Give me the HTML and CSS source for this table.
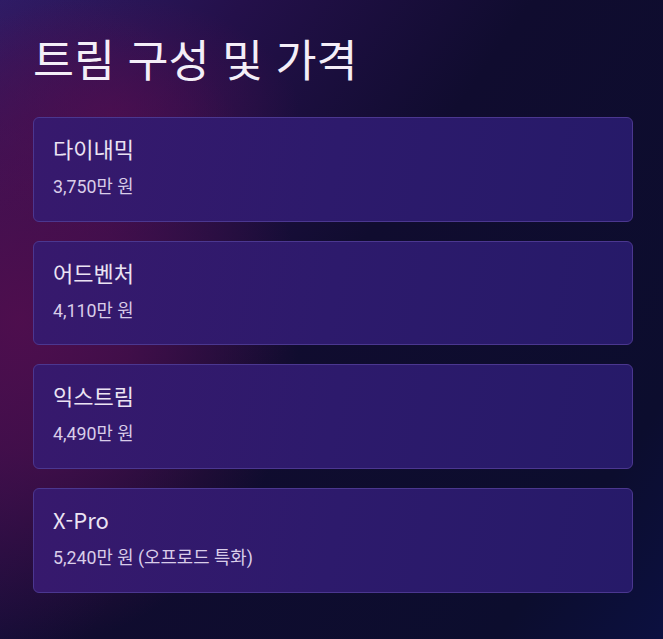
FILE: index.html
```html
<!DOCTYPE html>
<html lang="ko">
<head>
<meta charset="utf-8">
<link rel="stylesheet" href="styles.css">
</head>
<body>
<main class="page">
  <h1 class="title">트림 구성 및 가격</h1>
  <div class="trims">
    <div class="card">
      <h3 class="name">다이내믹</h3>
      <p class="price">3,750만 원</p>
    </div>
    <div class="card">
      <h3 class="name">어드벤처</h3>
      <p class="price">4,110만 원</p>
    </div>
    <div class="card">
      <h3 class="name">익스트림</h3>
      <p class="price">4,490만 원</p>
    </div>
    <div class="card">
      <h3 class="name">X-Pro</h3>
      <p class="price">5,240만 원 (오프로드 특화)</p>
    </div>
  </div>
</main>
</body>
</html>
```
FILE: styles.css
```css
html, body {
  margin: 0;
  height: 100%;
}
body {
  background:
    radial-gradient(ellipse 190px 120px at 110px 115px, rgba(80, 14, 80, 0.75) 0%, rgba(80, 14, 80, 0) 100%),
    radial-gradient(ellipse 280px 330px at 20px 320px, rgba(80, 14, 78, 0.95) 0%, rgba(80, 14, 78, 0.7) 40%, rgba(80, 14, 78, 0) 100%),
    linear-gradient(125deg, #2e1c66 0%, #24104a 22%, #100c2f 48%, #0c0d2e 85%, #0c1040 100%);
  font-family: "Noto Sans CJK KR", "Noto Sans", sans-serif;
  color: #f2ecf7;
  overflow: hidden;
}
.page {
  padding: 31px 30px 0 33px;
}
.title {
  margin: 0 0 33px;
  font-size: 44.6px;
  line-height: 53px;
  font-weight: 400;
  color: #f4eef8;
}
.trims {
  display: flex;
  flex-direction: column;
  gap: 19px;
}
.card {
  border: 1px solid #4b3790;
  border-radius: 6px;
  background: linear-gradient(100deg, #37196d 0%, #2d1a6c 50%, #261a69 100%);
  padding: 14px 19px 18px;
  height: 104.7px;
  box-sizing: border-box;
}
.name {
  margin: 0 0 10px;
  font-family: "Noto Sans CJK KR", sans-serif;
  font-size: 22px;
  line-height: 32px;
  font-weight: 400;
  color: #ebe3f3;
}
.price {
  margin: 0;
  font-family: Roboto, "Noto Sans CJK KR", sans-serif;
  font-size: 17.8px;
  line-height: 26px;
  color: #d9cde9;
}
```
